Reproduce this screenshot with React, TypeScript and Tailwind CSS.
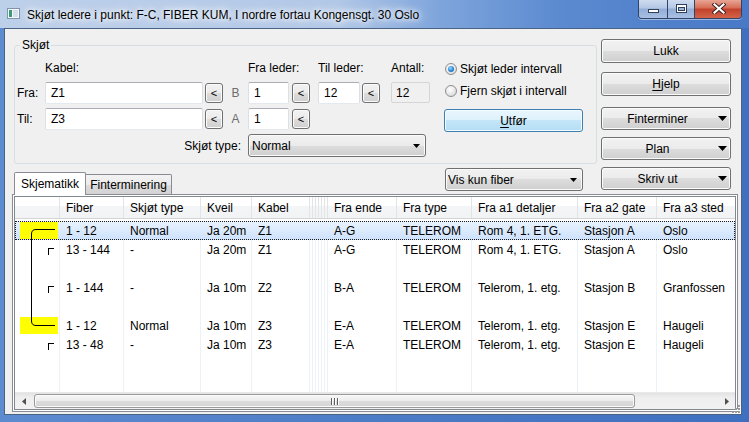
import React from "react";

const btnBase =
  "border border-[#707070] rounded-[3px] bg-[linear-gradient(#f2f2f2_0%,#ebebeb_50%,#dddddd_50%,#cfcfcf_100%)] shadow-[inset_0_0_0_1px_#fbfbfb]";

const inputBase =
  "h-[22px] bg-white border border-[#abadb3] border-x-[#dbdfe6] border-b-[#e3e9ef] rounded-[2px] flex items-center pl-[5px] shrink-0";

const W = [
  "w-[44px]",
  "w-[64px]",
  "w-[77px]",
  "w-[51px]",
  "w-[58px]",
  "w-[3px]",
  "w-[3px]",
  "w-[3px]",
  "w-[3px]",
  "w-[3px]",
  "w-[3px]",
  "w-[69px]",
  "w-[75px]",
  "w-[106px]",
  "w-[79px]",
  "w-[150px]",
];
const HEAD = [
  "",
  "Fiber",
  "Skjøt type",
  "Kveil",
  "Kabel",
  "",
  "",
  "",
  "",
  "",
  "",
  "Fra ende",
  "Fra type",
  "Fra a1 detaljer",
  "Fra a2 gate",
  "Fra a3 sted",
];
const DATA_IDX = [1, 2, 3, 4, 11, 12, 13, 14, 15];

type RowT = { mark?: "yellow" | "bracket"; sel?: boolean; v?: string[] };
const ROWS: RowT[] = [
  {
    mark: "yellow",
    sel: true,
    v: ["1 - 12", "Normal", "Ja 20m", "Z1", "A-G", "TELEROM", "Rom 4, 1. ETG.", "Stasjon A", "Oslo"],
  },
  {
    mark: "bracket",
    v: ["13 - 144", "-", "Ja 20m", "Z1", "A-G", "TELEROM", "Rom 4, 1. ETG.", "Stasjon A", "Oslo"],
  },
  {},
  {
    mark: "bracket",
    v: ["1 - 144", "-", "Ja 10m", "Z2", "B-A", "TELEROM", "Telerom, 1. etg.", "Stasjon B", "Granfossen"],
  },
  {},
  {
    mark: "yellow",
    v: ["1 - 12", "Normal", "Ja 10m", "Z3", "E-A", "TELEROM", "Telerom, 1. etg.", "Stasjon E", "Haugeli"],
  },
  {
    mark: "bracket",
    v: ["13 - 48", "-", "Ja 10m", "Z3", "E-A", "TELEROM", "Telerom, 1. etg.", "Stasjon E", "Haugeli"],
  },
];

function Tri({ w, h }: { w: number; h: number }) {
  return (
    <svg width={w} height={h} viewBox={`0 0 ${w} ${h}`} className="shrink-0">
      <polygon points={`0,0 ${w},0 ${w / 2},${h}`} fill="#000" />
    </svg>
  );
}

function SmallBtn({ ml }: { ml: string }) {
  return (
    <div
      className={`${ml} ${btnBase} w-[18px] h-[20px] self-start mt-[1px] flex items-center justify-center text-[11px] leading-none shrink-0`}
    >
      &lt;
    </div>
  );
}

function Radio({ checked, label, mt }: { checked?: boolean; label: string; mt: string }) {
  return (
    <div className={`${mt} flex items-center h-[16px]`}>
      <div className="ml-[1px] w-[12px] h-[12px] rounded-full border border-[#8e8f8f] bg-[radial-gradient(circle_at_40%_35%,#ffffff,#e6e6e6_55%,#cdcdcd)] flex items-center justify-center shrink-0">
        {checked && (
          <div className="w-[6px] h-[6px] rounded-full bg-[radial-gradient(circle_at_40%_35%,#9bd8ff,#2a86d6_55%,#0d4d8c)]" />
        )}
      </div>
      <span className="ml-[3px] whitespace-nowrap">{label}</span>
    </div>
  );
}

function DropBtn({ label, mt }: { label: string; mt: string }) {
  return (
    <div className={`${mt} ${btnBase} h-[23px] flex items-center`}>
      <div className="w-[111px] text-center whitespace-nowrap">{label}</div>
      <div className="ml-[5px]">
        <Tri w={9} h={5} />
      </div>
    </div>
  );
}

function Cell({ i, children, cls }: { i: number; children?: React.ReactNode; cls: string }) {
  const narrow = i >= 5 && i <= 10;
  return (
    <div
      className={`${W[i]} shrink-0 h-full flex items-center whitespace-nowrap overflow-hidden ${
        i > 0 ? `border-l ${cls}` : ""
      } ${i > 0 && !narrow ? "pl-[6px]" : ""}`}
    >
      {children}
    </div>
  );
}

function Row({ r }: { r: RowT }) {
  return (
    <div
      className={`flex h-[19px] shrink-0 ${
        r.sel
          ? "bg-[linear-gradient(#eaf3fe,#cde2fc)] outline-1 outline-dotted outline-[#1a1a1a] -outline-offset-1"
          : ""
      }`}
    >
      {W.map((_, i) => {
        let content: React.ReactNode = null;
        if (i === 0) {
          if (r.mark === "yellow") content = <div className="ml-[5px] w-[38px] h-[17px] bg-[#ffff00]" />;
          if (r.mark === "bracket")
            content = (
              <div className="ml-[33px] self-start mt-[8px] w-[6px] h-[7px] border-l border-t border-black" />
            );
        } else {
          const k = DATA_IDX.indexOf(i);
          if (k >= 0 && r.v) content = r.v[k];
        }
        return (
          <Cell key={i} i={i} cls={r.sel ? "border-transparent" : "border-[#edf2f9]"}>
            {content}
          </Cell>
        );
      })}
    </div>
  );
}

export default function App() {
  return (
    <div className="relative w-[749px] h-[422px] overflow-hidden flex flex-col bg-[linear-gradient(90deg,#5d8bd0_0%,#4c7cc6_50%,#3f70c0_100%)] font-['Liberation_Sans',Arial,sans-serif] text-[12px] leading-[16px] text-black">
      {/* Title bar */}
      <div className="h-[28px] shrink-0 flex items-start bg-[linear-gradient(90deg,#bdd0ea_0%,#b2c8e7_45%,#80a6dc_58%,#5b8ad0_75%,#4879c7_100%)]">
        <svg className="ml-[7px] mt-[8px] shrink-0" width="13" height="11" viewBox="0 0 13 11">
          <rect x="0.5" y="0.5" width="12" height="10" fill="#f4f7fb" stroke="#8194ad" />
          <rect x="2" y="2" width="3" height="7" fill="#3b9c73" />
          <rect x="6" y="2" width="5" height="7" fill="#d6e0ec" />
        </svg>
        <div className="ml-[7px] mt-[7px] whitespace-nowrap [text-shadow:0_0_5px_#fff,0_0_9px_#fff,0_0_13px_#fff]">
          Skjøt ledere i punkt: F-C, FIBER KUM, I nordre fortau Kongensgt. 30 Oslo
        </div>
        <div className="flex-1" />
        <div className="mr-[7px] flex h-[19px] border border-t-0 border-[#2f4468] rounded-b-[4px] overflow-hidden shrink-0 shadow-[0_1px_0_rgba(255,255,255,0.45)]">
          <div className="w-[28px] flex justify-center items-start bg-[linear-gradient(#cfdcef,#b3c7e5_45%,#93add6_50%,#a9c0e3)]">
            <svg className="mt-[9px]" width="11" height="4" viewBox="0 0 11 4">
              <rect x="0.5" y="0.5" width="10" height="3" fill="#fff" stroke="#2f3f5a" />
            </svg>
          </div>
          <div className="w-[27px] border-l border-[#2f4468] flex justify-center items-start bg-[linear-gradient(#cfdcef,#b3c7e5_45%,#93add6_50%,#a9c0e3)]">
            <svg className="mt-[4px]" width="11" height="9" viewBox="0 0 11 9">
              <rect x="0.5" y="0.5" width="10" height="8" fill="#fff" stroke="#2f3f5a" />
              <rect x="2.5" y="3.5" width="6" height="3" fill="#9fb6dc" stroke="#2f3f5a" />
            </svg>
          </div>
          <div className="w-[47px] border-l border-[#2f4468] flex justify-center items-start bg-[linear-gradient(#e9a595,#d66c55_45%,#c2402a_50%,#d3634a)]">
            <svg className="mt-[3px] ml-[1px]" width="14" height="11" viewBox="0 0 14 11">
              <path d="M2.5 1.5 L11.5 9.5 M11.5 1.5 L2.5 9.5" stroke="#3a2020" strokeWidth="4" strokeLinecap="square" />
              <path d="M2.5 1.5 L11.5 9.5 M11.5 1.5 L2.5 9.5" stroke="#ffffff" strokeWidth="2.2" strokeLinecap="square" />
            </svg>
          </div>
        </div>
      </div>

      {/* Client area */}
      <div className="relative ml-[4px] w-[738px] h-[387px] shrink-0 border border-[#4a6284] bg-[#f0f0f0] flex flex-col">
        <div className="flex items-start shrink-0">
          {/* Left column */}
          <div className="ml-[9px] w-[583px] flex flex-col shrink-0">
            <fieldset className="mt-[8px] w-[583px] h-[127px] border border-[#d5dfe5] rounded-[3px] min-w-0">
              <legend className="ml-[5px] px-[2px] leading-[16px]">Skjøt</legend>
              <div className="flex">
                {/* grid */}
                <div className="ml-[2px] flex flex-col w-[413px] shrink-0">
                  <div className="mt-[7px] h-[16px] flex whitespace-nowrap">
                    <div className="w-[28px]" />
                    <div className="w-[203px]">Kabel:</div>
                    <div className="w-[70px]">Fra leder:</div>
                    <div className="w-[73px]">Til leder:</div>
                    <div>Antall:</div>
                  </div>
                  <div className="mt-[6px] h-[22px] flex">
                    <div className="w-[28px] flex items-center">Fra:</div>
                    <div className={`${inputBase} w-[158px]`}>Z1</div>
                    <SmallBtn ml="ml-[2px]" />
                    <div className="w-[25px] flex items-center justify-center text-[#6d6d6d]">B</div>
                    <div className={`${inputBase} w-[41px]`}>1</div>
                    <SmallBtn ml="ml-[3px]" />
                    <div className={`${inputBase} ml-[8px] w-[42px]`}>12</div>
                    <SmallBtn ml="ml-[2px]" />
                    <div className="ml-[11px] w-[39px] h-[21px] border border-[#d5d5d5] rounded-[2px] bg-[#f0f0f0] flex items-center pl-[4px]">
                      12
                    </div>
                  </div>
                  <div className="mt-[4px] h-[22px] flex">
                    <div className="w-[28px] flex items-center">Til:</div>
                    <div className={`${inputBase} w-[158px]`}>Z3</div>
                    <SmallBtn ml="ml-[2px]" />
                    <div className="w-[25px] flex items-center justify-center text-[#6d6d6d]">A</div>
                    <div className={`${inputBase} w-[41px]`}>1</div>
                    <SmallBtn ml="ml-[3px]" />
                  </div>
                  <div className="mt-[4px] h-[23px] flex">
                    <div className="w-[231px] flex items-center justify-end pr-[7px] whitespace-nowrap">Skjøt type:</div>
                    <div className={`${btnBase} w-[178px] h-[23px] flex items-center justify-between pl-[3px] pr-[5px]`}>
                      <span>Normal</span>
                      <Tri w={7} h={4} />
                    </div>
                  </div>
                </div>
                {/* radios + Utfør */}
                <div className="ml-[14px] w-[139px] flex flex-col shrink-0">
                  <Radio checked label="Skjøt leder intervall" mt="mt-[8px]" />
                  <Radio label="Fjern skjøt i intervall" mt="mt-[6px]" />
                  <div className="mt-[10px] h-[23px] border border-[#3c7fb1] rounded-[3px] bg-[linear-gradient(#eaf6fd_0%,#dcf1fc_50%,#c4e6f8_50%,#b4def5_100%)] shadow-[inset_0_0_0_1px_#f6fbfe] flex items-center justify-center">
                    <span>
                      <span className="underline underline-offset-[2px]">U</span>tfør
                    </span>
                  </div>
                </div>
              </div>
            </fieldset>

            {/* Tabs row */}
            <div className="h-[30px] flex items-end shrink-0">
              <div className="relative z-10 w-[72px] h-[23px] -mb-px bg-white border border-b-0 border-[#898c95] rounded-t-[2px] flex items-center justify-center whitespace-nowrap">
                Skjematikk
              </div>
              <div className="w-[86px] h-[20px] border border-l-0 border-b-0 border-[#898c95] rounded-tr-[2px] bg-[linear-gradient(#f3f3f3,#ebebeb_50%,#dddddd_50%,#d2d2d2)] flex items-center justify-center whitespace-nowrap">
                Finterminering
              </div>
              <div className={`${btnBase} ml-[273px] self-start mt-[4px] w-[138px] h-[23px] flex items-center justify-between pl-[2px] pr-[5px]`}>
                <span className="whitespace-nowrap">Vis kun fiber</span>
                <Tri w={7} h={4} />
              </div>
            </div>
          </div>

          {/* Right buttons */}
          <div className="ml-[4px] w-[130px] flex flex-col shrink-0">
            <div className={`mt-[10px] ${btnBase} h-[24px] flex items-center justify-center`}>Lukk</div>
            <div className={`mt-[9px] ${btnBase} h-[24px] flex items-center justify-center`}>
              <span>
                <span className="underline underline-offset-[2px]">H</span>jelp
              </span>
            </div>
            <DropBtn label="Finterminer" mt="mt-[11px]" />
            <DropBtn label="Plan" mt="mt-[7px]" />
            <DropBtn label="Skriv ut" mt="mt-[7px]" />
          </div>
        </div>

        {/* Tab panel */}
        <div className="ml-[7px] w-[726px] h-[218px] shrink-0 border border-[#898c95] bg-white p-px flex">
          <div className="flex-1 min-w-0 border border-[#828790] flex flex-col overflow-hidden bg-white">
            {/* Header */}
            <div className="h-[22px] shrink-0 flex border-b border-[#d5d5d5] bg-[linear-gradient(#ffffff_0%,#ffffff_45%,#f4f5f7_45%,#f2f3f5_100%)]">
              {HEAD.map((h, i) => (
                <Cell key={i} i={i} cls="border-[#e3e4e6]">
                  {h}
                </Cell>
              ))}
            </div>
            {/* Body */}
            <div className="relative flex-1 min-h-0 flex flex-col pt-[2px]">
              {ROWS.map((r, i) => (
                <Row key={i} r={r} />
              ))}
              <div className="flex-1 flex">
                {W.map((_, i) => (
                  <Cell key={i} i={i} cls="border-[#edf2f9]" />
                ))}
              </div>
              <svg className="absolute left-0 top-0 pointer-events-none" width="44" height="112" viewBox="0 0 44 112">
                <path
                  d="M40 10.5 H21 Q16.5 10.5 16.5 15 V102 Q16.5 106.5 21 106.5 H40"
                  fill="none"
                  stroke="#000"
                  strokeWidth="1"
                />
              </svg>
            </div>
            {/* Horizontal scrollbar */}
            <div className="h-[17px] shrink-0 flex items-center bg-[linear-gradient(#e3e3e3,#efefef_30%,#f1f1f1)] border-t border-[#e8e8e8]">
              <div className="w-[17px] h-full flex items-center justify-center">
                <svg width="4" height="7" viewBox="0 0 4 7">
                  <polygon points="4,0 4,7 0,3.5" fill="#505050" />
                </svg>
              </div>
              <div className="ml-[2px] w-[601px] h-[14px] rounded-[3px] border border-[#9a9a9a] bg-[linear-gradient(#f7f7f7,#ececec_50%,#dcdcdc_50%,#d4d4d4)] shadow-[inset_0_0_0_1px_#fafafa] flex items-center justify-center">
                <svg width="8" height="7" viewBox="0 0 8 7">
                  <path d="M0.5 0 V7 M3.5 0 V7 M6.5 0 V7" stroke="#606060" />
                  <path d="M1.5 0 V7 M4.5 0 V7 M7.5 0 V7" stroke="#ffffff" />
                </svg>
              </div>
              <div className="flex-1" />
              <div className="w-[17px] h-full flex items-center justify-center">
                <svg width="4" height="7" viewBox="0 0 4 7">
                  <polygon points="0,0 0,7 4,3.5" fill="#505050" />
                </svg>
              </div>
            </div>
          </div>
        </div>

        {/* Size grip */}
        <svg className="absolute right-0 bottom-0" width="11" height="11" viewBox="0 0 11 11">
          {[
            [8, 8],
            [8, 5],
            [5, 8],
            [8, 2],
            [5, 5],
            [2, 8],
          ].map(([x, y], i) => (
            <g key={i}>
              <rect x={x + 1} y={y + 1} width="2" height="2" fill="#ffffff" />
              <rect x={x} y={y} width="2" height="2" fill="#9a9a9a" />
            </g>
          ))}
        </svg>
      </div>
    </div>
  );
}
